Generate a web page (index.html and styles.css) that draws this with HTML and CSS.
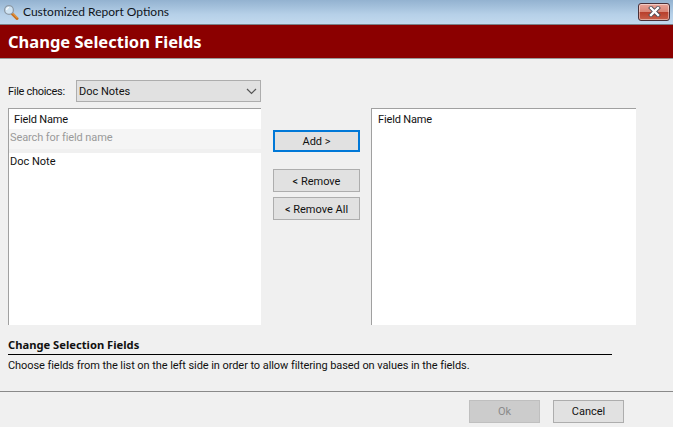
FILE: index.html
```html
<!DOCTYPE html>
<html lang="en">
<head>
<meta charset="utf-8">
<title>Customized Report Options</title>
<link rel="stylesheet" href="styles.css">
</head>
<body>
<div class="window">
  <header class="titlebar">
    <svg class="app-icon" width="16" height="16" viewBox="0 0 16 16">
      <path d="M9 9.5 L14 14.5" stroke="#c9701f" stroke-width="3" stroke-linecap="round"/>
      <path d="M9.5 9 L14.5 14" stroke="#f2b25a" stroke-width="1"/>
      <circle cx="6" cy="6" r="4.4" fill="#cfe3f2" stroke="#8d9aa6" stroke-width="1.3"/>
      <path d="M3.6 6 A2.6 2.6 0 0 1 6 3.5" fill="none" stroke="#ffffff" stroke-width="1.2"/>
    </svg>
    <span class="title-text">Customized Report Options</span>
    <div class="close-btn">
      <svg width="15" height="11" viewBox="0 0 15 11">
        <path d="M4 2 L11 9 M11 2 L4 9" stroke="#4a4a55" stroke-width="4" stroke-linecap="square"/>
        <path d="M4 2 L11 9 M11 2 L4 9" stroke="#ffffff" stroke-width="2.4" stroke-linecap="square"/>
      </svg>
    </div>
  </header>
  <div class="banner">Change Selection Fields</div>
  <main class="content">
    <div class="file-row">
      <label class="file-label">File choices:</label>
      <div class="select">
        <span>Doc Notes</span>
        <svg width="11" height="7" viewBox="0 0 11 7"><path d="M1 1 L5.5 5.5 L10 1" fill="none" stroke="#555" stroke-width="1.2"/></svg>
      </div>
    </div>
    <div class="panels">
      <section class="list">
        <div class="list-head">Field Name</div>
        <div class="search">Search for field name</div>
        <div class="list-item">Doc Note</div>
      </section>
      <div class="actions">
        <button class="btn btn-primary">Add &gt;</button>
        <button class="btn btn-remove">&lt; Remove</button>
        <button class="btn btn-remove-all">&lt; Remove All</button>
      </div>
      <section class="list list-right">
        <div class="list-head">Field Name</div>
      </section>
    </div>
    <div class="help">
      <div class="help-title">Change Selection Fields</div>
      <div class="help-text">Choose fields from the list on the left side in order to allow filtering based on values in the fields.</div>
    </div>
  </main>
  <footer class="footer">
    <button class="btn btn-foot btn-disabled">Ok</button>
    <button class="btn btn-foot">Cancel</button>
  </footer>
</div>
</body>
</html>
```
FILE: styles.css
```css
* { box-sizing: border-box; }
html, body { margin: 0; padding: 0; width: 673px; height: 427px; overflow: hidden; }
body { background: #f0f0f0; font-family: "Roboto", "Noto Sans", sans-serif; font-size: 11px; color: #111; }
.window { display: flex; flex-direction: column; height: 427px; }

.titlebar { height: 25px; display: flex; align-items: center; padding: 0 3px 1px 3px; border-bottom: 1px solid #7a8087; background: linear-gradient(#93b2d0, #b6d0e8 60%, #c2d9ee); }
.app-icon { flex: none; }
.title-text { margin-left: 4px; font-family: "Lato", sans-serif; font-size: 12px; color: #10151c; }
.close-btn { margin-left: auto; width: 32px; height: 18px; border: 1px solid #4a3038; border-radius: 3px; display: flex; align-items: center; justify-content: center; background: linear-gradient(#e8a398, #d98677 48%, #b83f2c 52%, #c8604a); box-shadow: inset 0 0 0 1px rgba(255,255,255,.45); }

.banner { height: 34px; background: #8b0000; border-bottom: 1px solid #9a9a9a; color: #fff; font-family: "Noto Sans", sans-serif; font-weight: 700; font-size: 16.5px; line-height: 33px; padding-left: 8px; }

.content { flex: 1; padding: 21px 37px 0 8px; display: flex; flex-direction: column; }
.file-row { display: flex; align-items: center; height: 22px; }
.file-label { width: 68px; letter-spacing: -0.3px; }
.select { width: 185px; height: 22px; background: #e1e1e1; border: 1px solid #adadad; display: flex; align-items: center; justify-content: space-between; padding: 0 3px 0 2px; }

.panels { display: flex; margin-top: 6px; height: 217px; }
.list { width: 253px; background: #fff; border-top: 1px solid #a0a0a0; border-left: 1px solid #a0a0a0; }
.list-right { width: 265px; }
.list-head { height: 20px; line-height: 22px; padding-left: 5px; letter-spacing: -0.15px; }
.list-right .list-head { padding-left: 6px; }
.search { height: 24px; line-height: 17px; padding-left: 1px; background: linear-gradient(#f5f5f5 20px, #f0f0f0 20px); color: #9a9a9a; letter-spacing: -0.1px; }
.list-item { height: 17px; line-height: 17px; padding-left: 1px; }

.actions { width: 110px; padding: 22px 11px 0 12px; display: flex; flex-direction: column; flex: none; }
.btn { font: inherit; color: #111; background: #e1e1e1; border: 1px solid #adadad; padding: 0; width: 87px; height: 23px; }
.btn-primary { height: 22px; border: 2px solid #0078d7; }
.btn-remove { margin-top: 17px; padding-top: 1px; }
.btn-remove-all { margin-top: 5px; padding-top: 1px; }

.help { margin-top: 12px; width: 604px; }
.help-title { font-family: "Noto Sans", sans-serif; font-size: 11.2px; font-weight: 700; height: 17px; line-height: 15px; border-bottom: 1px solid #000; box-sizing: content-box; }
.help-text { margin-top: 2px; line-height: 17px; letter-spacing: -0.07px; }

.footer { height: 36px; border-top: 1px solid #8a8a8a; display: flex; justify-content: flex-end; align-items: flex-start; padding: 8px 49px 0 0; gap: 13px; }
.btn-foot { width: 71px; height: 23px; }
.btn-disabled { background: #cccccc; border-color: #bfbfbf; color: #8a8a8a; }
```
